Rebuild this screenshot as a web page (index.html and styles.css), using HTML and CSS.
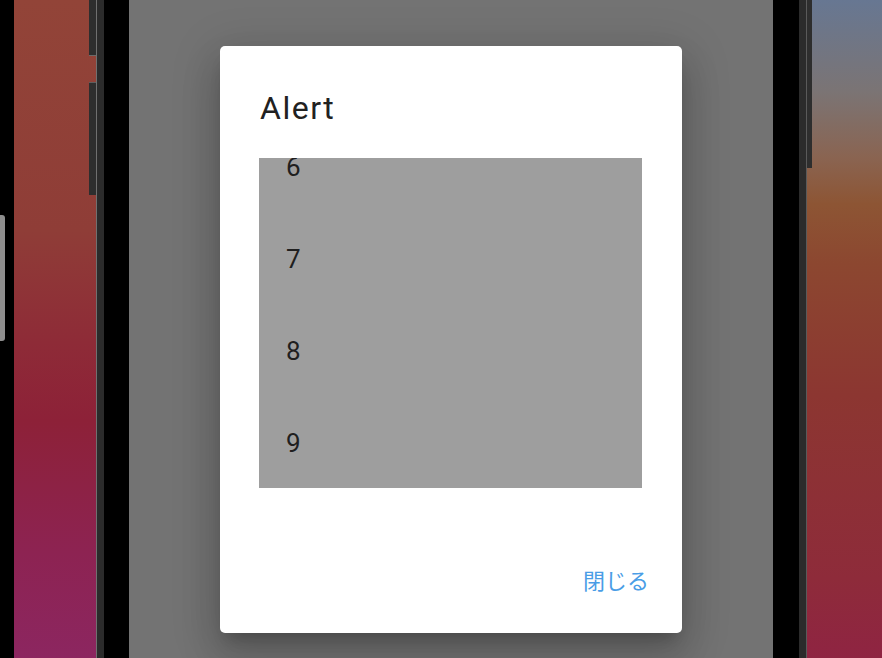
FILE: index.html
```html
<!DOCTYPE html>
<html lang="ja">
<head>
    <meta charset="UTF-8">
    <meta name="viewport" content="width=device-width, initial-scale=1.0">
    <title>Alert</title>
    <link rel="stylesheet" href="styles.css">
</head>
<body>
    <div class="desk">
        <div class="edge-left">
            <span class="handle"></span>
        </div>

        <!-- ventana de la izquierda -->
        <div class="side side-left">
            <span class="tab tab-a"></span>
            <span class="tab tab-b"></span>
        </div>
        <div class="bezel bezel-left"></div>

        <!-- app con el diálogo abierto -->
        <main class="app">
            <div class="dialog">
                <h2 class="dialog-title">Alert</h2>
                <div class="list-box">
                    <ul class="list">
                        <li>6</li>
                        <li>7</li>
                        <li>8</li>
                        <li>9</li>
                    </ul>
                </div>
                <div class="actions">
                    <button type="button" class="text-button">閉じる</button>
                </div>
            </div>
        </main>

        <div class="bezel bezel-right"></div>
        <div class="side side-right">
            <span class="tab tab-c"></span>
        </div>
    </div>
</body>
</html>
```

FILE: styles.css
```css
html, body {
    margin: 0;
    padding: 0;
    height: 100%;
    background: #000;
    overflow: hidden;
}

body {
    font-family: 'Roboto', 'Noto Sans CJK JP', sans-serif;
}

.desk {
    display: flex;
    height: 658px;
}

.edge-left {
    position: relative;
    width: 14px;
    background: #000;
}

.handle {
    position: absolute;
    left: 0;
    top: 215px;
    width: 5px;
    height: 126px;
    background: #8e8e8e;
    border-radius: 0 3px 3px 0;
}

.side {
    position: relative;
}

.side-left {
    width: 82px;
    background: linear-gradient(180deg, #924438 0%, #8f3d37 35%, #8e2b37 52%, #8d2138 64%, #8d2352 84%, #8c2660 100%);
    border-right: 1px solid #707070;
}

.side-right {
    flex: 1;
    background: linear-gradient(180deg, #677792 0%, #7b7474 14%, #8a6451 24%, #8d5534 31%, #8c4730 40%, #8c3631 60%, #8e2b3a 88%, #8f2442 100%);
    border-left: 1px solid #5a5a5a;
}

.tab {
    position: absolute;
    background: #2e2e2e;
}

.tab-a {
    right: 0;
    top: 0;
    width: 7px;
    height: 55px;
    box-shadow: 0 1px 0 #6a6a6a;
}

.tab-b {
    right: 0;
    top: 82px;
    width: 7px;
    height: 112px;
    border-top: 1px solid #5e5e5e;
}

.tab-c {
    left: 0;
    top: 0;
    width: 5px;
    height: 168px;
}

.bezel {
    background: #000;
}

.bezel-left {
    width: 25px;
    border-left: 7px solid #2b2b2b;
}

.bezel-right {
    width: 26px;
    border-right: 7px solid #2b2b2b;
}

.app {
    width: 644px;
    background: #737373;
    display: flex;
    justify-content: center;
    align-items: flex-start;
}

.dialog {
    margin-top: 46px;
    width: 462px;
    height: 587px;
    box-sizing: border-box;
    background: #fff;
    border-radius: 5px;
    padding: 0 40px 0 39px;
    display: flex;
    flex-direction: column;
    box-shadow: 0 11px 15px -7px rgba(0, 0, 0, 0.2), 0 24px 38px 3px rgba(0, 0, 0, 0.14), 0 9px 46px 8px rgba(0, 0, 0, 0.12);
}

.dialog-title {
    margin: 0;
    padding: 42px 0 0 1px;
    height: 70px;
    font-size: 32px;
    font-weight: 400;
    line-height: 40px;
    letter-spacing: 1.5px;
    color: #212121;
}

.list-box {
    height: 330px;
    background: #9e9e9e;
    overflow: hidden;
}

.list {
    list-style: none;
    margin: -37px 0 0;
    padding: 0;
}

.list li {
    height: 92px;
    line-height: 92px;
    padding-left: 27px;
    font-size: 26px;
    color: #1f1f1f;
}

.actions {
    display: flex;
    justify-content: flex-end;
    padding-top: 72px;
    margin-right: -15px;
}

.text-button {
    background: none;
    border: none;
    padding: 4px 8px;
    font-family: 'Noto Sans CJK JP', sans-serif;
    font-size: 22px;
    line-height: 30px;
    color: #4a9de6;
    cursor: pointer;
}
```
